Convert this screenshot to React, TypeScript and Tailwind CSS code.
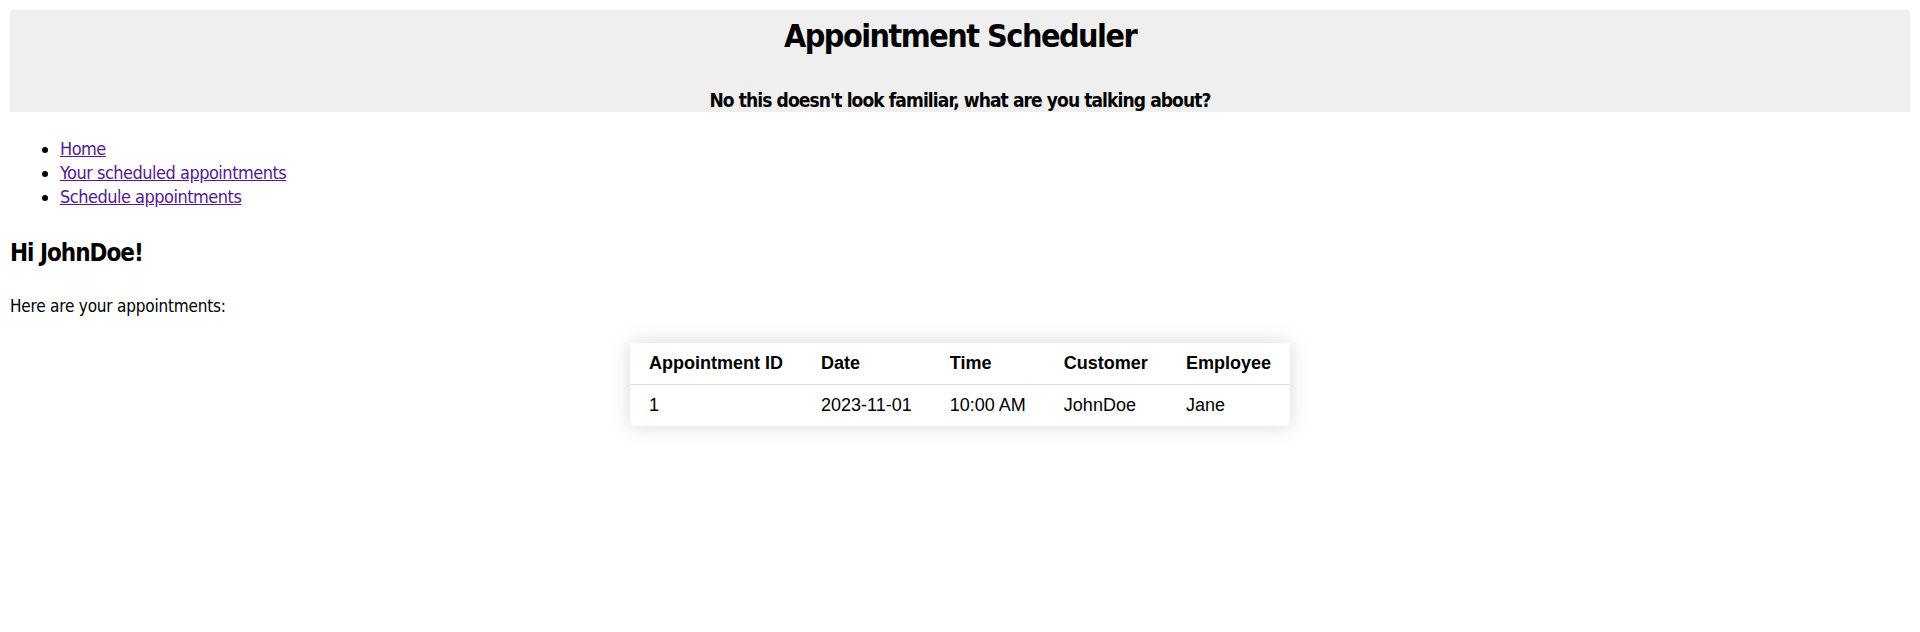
import React from 'react';

const links = ['Home', 'Your scheduled appointments', 'Schedule appointments'];

const appointments = [
    { id: 1, date: '2023-11-01', time: '10:00 AM', customer: 'JohnDoe', employee: 'Jane' },
];

const App: React.FC = () => {
    return (
        <div
            className="min-h-screen bg-white p-[10px] text-black"
            style={{ fontFamily: '"Liberation Sans Narrow", "DejaVu Sans Condensed", Roboto, sans-serif' }}
        >
            {/* Header */}
            <header className="flex h-[102px] flex-col items-center overflow-hidden bg-[#efefef] text-center">
                <h1 className="mt-[6px] text-[32px] font-bold leading-[40px] tracking-[-1.5px]">
                    Appointment Scheduler
                </h1>
                <h3 className="mt-[32px] text-[19px] font-bold leading-[24px] tracking-[-0.9px]">
                    No this doesn't look familiar, what are you talking about?
                </h3>
            </header>

            {/* Nav */}
            <ul className="mt-[25px] list-disc pl-[50px] text-[18px] leading-[24px] tracking-[-0.5px]">
                {links.map((l) => (
                    <li key={l}>
                        <a href="#" className="text-[#551a8b] underline">
                            {l}
                        </a>
                    </li>
                ))}
            </ul>

            <h2 className="mt-[29px] text-[24px] font-bold leading-[30px] tracking-[-1px]">Hi JohnDoe!</h2>
            <p className="mt-[28px] text-[17px] leading-[20px] tracking-[-0.2px]">Here are your appointments:</p>

            {/* Appointments table */}
            <table
                className="mx-auto mt-[27px] border-collapse bg-white text-[18px] leading-[21px] shadow-[0_0_20px_rgba(0,0,0,0.15)]"
                style={{ fontFamily: '"Liberation Sans", Arial, sans-serif' }}
            >
                <thead>
                    <tr className="border-b border-[#dddddd]">
                        <th className="px-[19px] py-[10px] text-left font-bold">Appointment ID</th>
                        <th className="px-[19px] py-[10px] text-left font-bold">Date</th>
                        <th className="px-[19px] py-[10px] text-left font-bold">Time</th>
                        <th className="px-[19px] py-[10px] text-left font-bold">Customer</th>
                        <th className="px-[19px] py-[10px] text-left font-bold">Employee</th>
                    </tr>
                </thead>
                <tbody>
                    {appointments.map((a) => (
                        <tr key={a.id}>
                            <td className="px-[19px] py-[10px]">{a.id}</td>
                            <td className="px-[19px] py-[10px]">{a.date}</td>
                            <td className="px-[19px] py-[10px]">{a.time}</td>
                            <td className="px-[19px] py-[10px]">{a.customer}</td>
                            <td className="px-[19px] py-[10px]">{a.employee}</td>
                        </tr>
                    ))}
                </tbody>
            </table>
        </div>
    );
};

export default App;
